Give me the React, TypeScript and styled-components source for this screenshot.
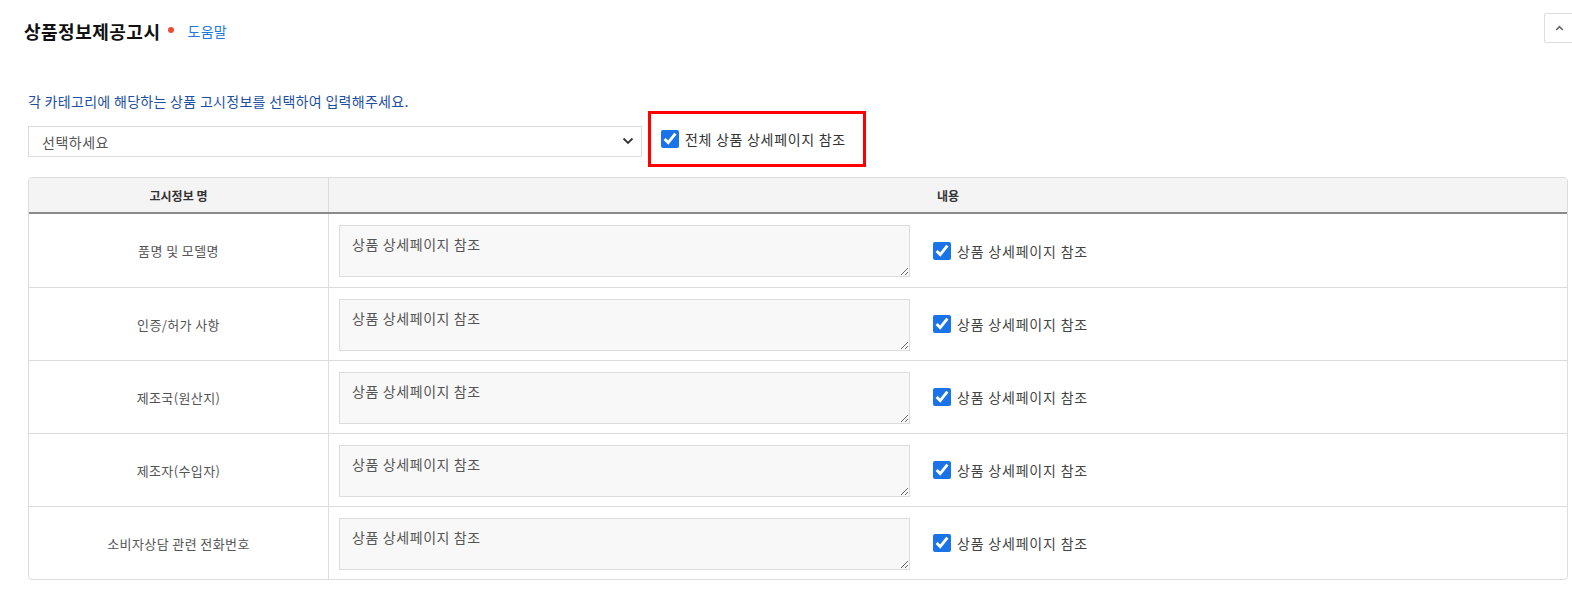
import React from "react";
import styled, { createGlobalStyle } from "styled-components";

const Global = createGlobalStyle`
  html, body { margin: 0; padding: 0; background: #fff; overflow: hidden; }
  body { font-family: "Noto Sans CJK KR", "Noto Sans", sans-serif; color: #333; }
  * { box-sizing: border-box; }
`;

const Page = styled.section`
  width: 1572px;
  padding: 13px 0 0 24px;
`;

const HeaderRow = styled.div`
  display: flex;
  align-items: flex-start;
  justify-content: space-between;
  height: 57px;
`;

const TitleGroup = styled.div`
  display: flex;
  align-items: center;
  height: 36px;
`;

const Title = styled.h2`
  margin: 0;
  font-size: 18px;
  font-weight: 700;
  color: #111;
  letter-spacing: 0.5px;
`;

const RequiredDot = styled.span`
  width: 6px;
  height: 6px;
  border-radius: 50%;
  background: #ed4c34;
  margin: 0 0 3px 8px;
`;

const HelpLink = styled.a`
  margin-left: 13px;
  font-size: 14px;
  letter-spacing: 0.3px;
  color: #1f78e0;
  text-decoration: none;
  cursor: pointer;
`;

const CollapseButton = styled.button`
  width: 31px;
  height: 30px;
  margin-right: -3px;
  border: 1px solid #dcdcdc;
  border-radius: 2px;
  background: #fff;
  display: flex;
  align-items: center;
  justify-content: center;
  padding: 0;
  cursor: pointer;
`;

const Body = styled.div`
  padding-left: 4px;
  padding-right: 4px;
`;

const Guide = styled.p`
  margin: 21px 0 0 0;
  font-size: 14px;
  letter-spacing: 0.3px;
  line-height: 20px;
  color: #1e4f9e;
`;

const ControlRow = styled.div`
  display: flex;
  align-items: flex-start;
  gap: 6px;
`;

const SelectWrap = styled.div`
  position: relative;
  width: 614px;
  height: 31px;
  margin-top: 15px;
`;

const Select = styled.select`
  appearance: none;
  width: 100%;
  height: 100%;
  border: 1px solid #dcdcdc;
  border-radius: 0;
  background: #fff;
  padding: 0 36px 0 13px;
  font-family: inherit;
  font-size: 14px;
  letter-spacing: 0.5px;
  color: #555;
  outline: none;
`;

const SelectArrow = styled.svg`
  position: absolute;
  right: 8px;
  top: 10px;
  pointer-events: none;
`;

const Highlight = styled.label`
  display: flex;
  align-items: center;
  width: 218px;
  height: 56px;
  border: 3px solid #f00;
  padding-left: 10px;
  gap: 6px;
  font-size: 14px;
  letter-spacing: 0.7px;
  color: #333;
  cursor: pointer;
`;

const CheckLabel = styled.label`
  display: flex;
  align-items: center;
  gap: 6px;
  font-size: 14px;
  letter-spacing: 0.8px;
  color: #444;
  cursor: pointer;
`;

const Check = styled.input.attrs({ type: "checkbox" })`
  width: 18px;
  height: 18px;
  margin: 0;
  accent-color: #1a73e8;
`;

const Table = styled.div`
  margin-top: 10px;
  border: 1px solid #dcdcdc;
  border-radius: 4px;
  overflow: hidden;
`;

const HeadRow = styled.div`
  display: grid;
  grid-template-columns: 299px 1fr;
  height: 36px;
  background: #f4f4f4;
  border-bottom: 2px solid #8a8a8a;
`;

const HeadCell = styled.div`
  display: flex;
  align-items: center;
  justify-content: center;
  font-size: 12px;
  font-weight: 700;
  color: #333;
  & + & { border-left: 1px solid #dcdcdc; }
`;

const Row = styled.div`
  display: grid;
  grid-template-columns: 299px 1fr;
  height: 73px;
  & + & { border-top: 1px solid #dcdcdc; }
`;

const NameCell = styled.div`
  display: flex;
  align-items: center;
  justify-content: center;
  font-size: 13px;
  letter-spacing: 0.4px;
  color: #555;
`;

const ContentCell = styled.div`
  display: flex;
  align-items: center;
  gap: 23px;
  padding: 0 10px;
  border-left: 1px solid #dcdcdc;
`;

const TextArea = styled.textarea`
  width: 571px;
  height: 52px;
  margin-top: 1px;
  border: 1px solid #dcdcdc;
  background: #f8f8f8;
  padding: 8px 12px;
  font-family: inherit;
  font-size: 14px;
  letter-spacing: 0.6px;
  line-height: 20px;
  color: #555;
  outline: none;
`;

const rows = [
  "품명 및 모델명",
  "인증/허가 사항",
  "제조국(원산지)",
  "제조자(수입자)",
  "소비자상담 관련 전화번호",
];

export default function App() {
  return (
    <>
      <Global />
      <Page>
        <HeaderRow>
          <TitleGroup>
            <Title>상품정보제공고시</Title>
            <RequiredDot />
            <HelpLink>도움말</HelpLink>
          </TitleGroup>
          <CollapseButton aria-label="접기">
            <svg width="9" height="6" viewBox="0 0 9 6">
              <path d="M1.2 5 L4.5 1.7 L7.8 5" fill="none" stroke="#666" strokeWidth="1.6" />
            </svg>
          </CollapseButton>
        </HeaderRow>
        <Body>
          <Guide>각 카테고리에 해당하는 상품 고시정보를 선택하여 입력해주세요.</Guide>
          <ControlRow>
            <SelectWrap>
              <Select defaultValue="">
                <option value="">선택하세요</option>
              </Select>
              <SelectArrow width="12" height="10" viewBox="0 0 12 10">
                <path d="M1.5 2.5 L6 7 L10.5 2.5" fill="none" stroke="#333" strokeWidth="1.8" />
              </SelectArrow>
            </SelectWrap>
            <Highlight>
              <Check defaultChecked />
              전체 상품 상세페이지 참조
            </Highlight>
          </ControlRow>
          <Table>
            <HeadRow>
              <HeadCell>고시정보 명</HeadCell>
              <HeadCell>내용</HeadCell>
            </HeadRow>
            {rows.map((name) => (
              <Row key={name}>
                <NameCell>{name}</NameCell>
                <ContentCell>
                  <TextArea defaultValue="상품 상세페이지 참조" />
                  <CheckLabel>
                    <Check defaultChecked />
                    상품 상세페이지 참조
                  </CheckLabel>
                </ContentCell>
              </Row>
            ))}
          </Table>
        </Body>
      </Page>
    </>
  );
}
